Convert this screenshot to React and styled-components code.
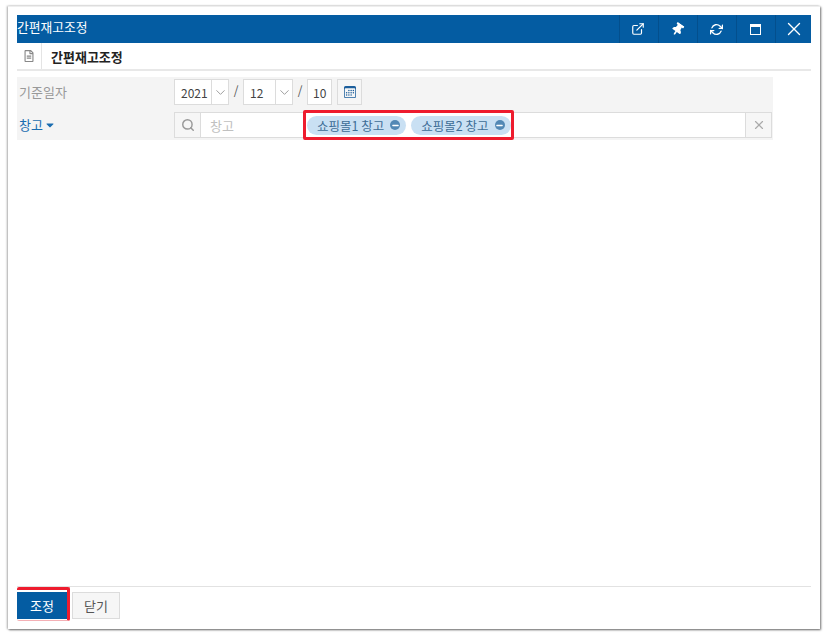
import React from "react";
import styled, { createGlobalStyle } from "styled-components";
import { FiExternalLink, FiSearch, FiChevronDown, FiX, FiRefreshCw, FiMinus } from "react-icons/fi";
import { FaThumbtack, FaCaretDown, FaRegFileAlt } from "react-icons/fa";
import { BsCalendar3 } from "react-icons/bs";

const GlobalStyle = createGlobalStyle`
  html, body {
    margin: 0;
    padding: 0;
    background: #fff;
    font-family: "Noto Sans CJK KR", "Noto Sans", sans-serif;
  }
`;

const Page = styled.div`
  width: 827px;
  height: 639px;
  padding: 6px 7px 10px 8px;
  box-sizing: border-box;
  overflow: hidden;
`;

const Window = styled.div`
  height: 100%;
  box-sizing: border-box;
  padding: 8px 9px 0 9px;
  display: flex;
  flex-direction: column;
  background: #fff;
  border-top: 1px solid #eee;
  box-shadow: 1px 1px 2px rgba(0, 0, 0, 0.55), -1px 0 2px rgba(0, 0, 0, 0.3);
`;

const TitleBar = styled.div`
  height: 28px;
  flex: none;
  display: flex;
  align-items: center;
  background: #045ca2;
  color: #fff;
`;

const TitleText = styled.div`
  flex: 1;
  font-size: 12.8px;
  line-height: 24px;
  align-self: flex-start;
`;

const ToolButton = styled.div`
  width: ${(props) => props.width || 39}px;
  height: 28px;
  padding-right: ${(props) => (props.width ? 0 : 2)}px;
  display: flex;
  align-items: center;
  justify-content: center;
  border-left: 1px solid #034f8d;
  box-sizing: border-box;
  font-size: ${(props) => props.size || 14}px;
`;

const MaxIcon = styled.div`
  width: 9px;
  height: 7px;
  border: 1.5px solid #fff;
  border-top-width: 3px;
`;

const SubHeader = styled.div`
  height: 28px;
  flex: none;
  box-sizing: border-box;
  display: flex;
  align-items: center;
  border-bottom: 2px solid #e8e8e8;
`;

const DocCell = styled.div`
  width: 25px;
  height: 100%;
  box-sizing: border-box;
  display: flex;
  align-items: center;
  justify-content: center;
  border-right: 1px solid #e4e4e4;
  color: #888;
  font-size: 12px;
`;

const SubTitle = styled.div`
  margin-left: 9px;
  padding-top: 1px;
  font-size: 13px;
  font-weight: 700;
  color: #222;
`;

const Form = styled.div`
  width: 756px;
  height: 63px;
  margin-top: 6px;
  flex: none;
  box-sizing: border-box;
  padding-top: 2px;
  background: #f4f4f4;
`;

const Row = styled.div`
  height: ${(props) => props.height}px;
  margin-bottom: ${(props) => props.gap || 0}px;
  display: flex;
  align-items: center;
`;

const Label = styled.div`
  width: 155px;
  margin-left: 2px;
  margin-top: -1px;
  flex: none;
  font-size: 13px;
  color: ${(props) => (props.link ? "#1a6db0" : "#999")};
  display: flex;
  align-items: center;
  gap: 1px;
`;

const DateSelect = styled.div`
  height: 26px;
  width: ${(props) => props.width}px;
  box-sizing: border-box;
  display: flex;
  border: 1px solid #dcdcdc;
  background: #fff;
`;

const DateValue = styled.div`
  flex: 1;
  padding-left: ${(props) => props.pad || 6}px;
  font-size: 12px;
  line-height: 26px;
  color: #444;
`;

const Arrow = styled.div`
  width: 16px;
  flex: none;
  display: flex;
  align-items: center;
  justify-content: center;
  border-left: 1px solid #dcdcdc;
  color: #999;
  font-size: 15px;
`;

const Slash = styled.div`
  width: 14px;
  text-align: center;
  font-size: 12px;
  color: #555;
  margin-top: -5px;
`;

const CalendarButton = styled.div`
  width: 25px;
  height: 26px;
  margin-left: 5px;
  box-sizing: border-box;
  display: flex;
  align-items: center;
  justify-content: center;
  border: 1px solid #dcdcdc;
  background: #f6f6f6;
  color: #1d5f9c;
  font-size: 12px;
`;

const SearchBox = styled.div`
  width: 598px;
  height: 26px;
  box-sizing: border-box;
  display: flex;
  border: 1px solid #dcdcdc;
  background: #fff;
`;

const SideButton = styled.div`
  width: 25px;
  flex: none;
  display: flex;
  align-items: center;
  justify-content: center;
  background: #f6f6f6;
  color: ${(props) => props.tone || "#999"};
  font-size: 14px;
  border-${(props) => props.side}: 1px solid #dcdcdc;
`;

const SearchInput = styled.div`
  flex: 1;
  position: relative;
  display: flex;
  align-items: center;
  padding-left: 9px;
  font-size: 13px;
  color: #c0c0c0;
`;

const TagsHighlight = styled.div`
  position: absolute;
  left: 102px;
  top: -3px;
  width: 211px;
  height: 30px;
  box-sizing: border-box;
  display: flex;
  align-items: center;
  gap: 5px;
  padding-left: 1px;
  border: 3px solid #ee1c2e;
  border-radius: 2px;
`;

const Tag = styled.div`
  height: 19px;
  flex: none;
  box-sizing: border-box;
  display: flex;
  align-items: center;
  gap: 6px;
  padding: 0 6px 0 10px;
  background: #c9e0f3;
  border-radius: 10px;
  font-size: 12.5px;
  color: #3d6d96;
  white-space: nowrap;
`;

const TagRemove = styled.div`
  width: 10px;
  height: 10px;
  display: flex;
  align-items: center;
  justify-content: center;
  border-radius: 50%;
  background: #5288b5;
  color: #fff;
  font-size: 9px;
`;

const Spacer = styled.div`
  flex: 1;
`;

const Footer = styled.div`
  height: 43px;
  flex: none;
  box-sizing: border-box;
  padding-top: 5px;
  display: flex;
  align-items: flex-start;
  gap: 5px;
  border-top: 1px solid #e2e2e2;
`;

const PrimaryButton = styled.div`
  position: relative;
  width: 50px;
  height: 27px;
  display: flex;
  align-items: center;
  justify-content: center;
  background: #045ca2;
  color: #fff;
  font-size: 13px;
`;

const ButtonMark = styled.div`
  position: absolute;
  left: 0;
  top: -5px;
  width: 53px;
  height: 34px;
  box-sizing: border-box;
  border-top: 3px solid #ee1c2e;
  border-right: 3px solid #ee1c2e;
  border-bottom: 1px solid #f4b0b5;
  border-radius: 2px;
`;

const PlainButton = styled.div`
  width: 48px;
  height: 27px;
  box-sizing: border-box;
  display: flex;
  align-items: center;
  justify-content: center;
  border: 1px solid #dcdcdc;
  background: #f6f6f6;
  color: #555;
  font-size: 13px;
`;

export default function App() {
  return (
    <Page>
      <GlobalStyle />
      <Window>
        <TitleBar>
          <TitleText>간편재고조정</TitleText>
          <ToolButton><FiExternalLink /></ToolButton>
          <ToolButton size={13}><FaThumbtack style={{ transform: "rotate(35deg)" }} /></ToolButton>
          <ToolButton size={13}><FiRefreshCw strokeWidth={2.5} /></ToolButton>
          <ToolButton><MaxIcon /></ToolButton>
          <ToolButton size={22} width={36}><FiX strokeWidth={1.5} /></ToolButton>
        </TitleBar>
        <SubHeader>
          <DocCell><FaRegFileAlt /></DocCell>
          <SubTitle>간편재고조정</SubTitle>
        </SubHeader>
        <Form>
          <Row height={26} gap={7}>
            <Label>기준일자</Label>
            <DateSelect width={55}>
              <DateValue>2021</DateValue>
              <Arrow><FiChevronDown strokeWidth={1.5} /></Arrow>
            </DateSelect>
            <Slash>/</Slash>
            <DateSelect width={50}>
              <DateValue>12</DateValue>
              <Arrow><FiChevronDown strokeWidth={1.5} /></Arrow>
            </DateSelect>
            <Slash>/</Slash>
            <DateSelect width={25}>
              <DateValue pad={5}>10</DateValue>
            </DateSelect>
            <CalendarButton><BsCalendar3 /></CalendarButton>
          </Row>
          <Row height={26}>
            <Label link>창고 <FaCaretDown size={12} /></Label>
            <SearchBox>
              <SideButton side="right" tone="#999"><FiSearch strokeWidth={2.5} /></SideButton>
              <SearchInput>
                창고
                <TagsHighlight>
                  <Tag>쇼핑몰1 창고<TagRemove><FiMinus strokeWidth={3.5} /></TagRemove></Tag>
                  <Tag>쇼핑몰2 창고<TagRemove><FiMinus strokeWidth={3.5} /></TagRemove></Tag>
                </TagsHighlight>
              </SearchInput>
              <SideButton side="left" tone="#aaa"><FiX /></SideButton>
            </SearchBox>
          </Row>
        </Form>
        <Spacer />
        <Footer>
          <PrimaryButton>조정<ButtonMark /></PrimaryButton>
          <PlainButton>닫기</PlainButton>
        </Footer>
      </Window>
    </Page>
  );
}
